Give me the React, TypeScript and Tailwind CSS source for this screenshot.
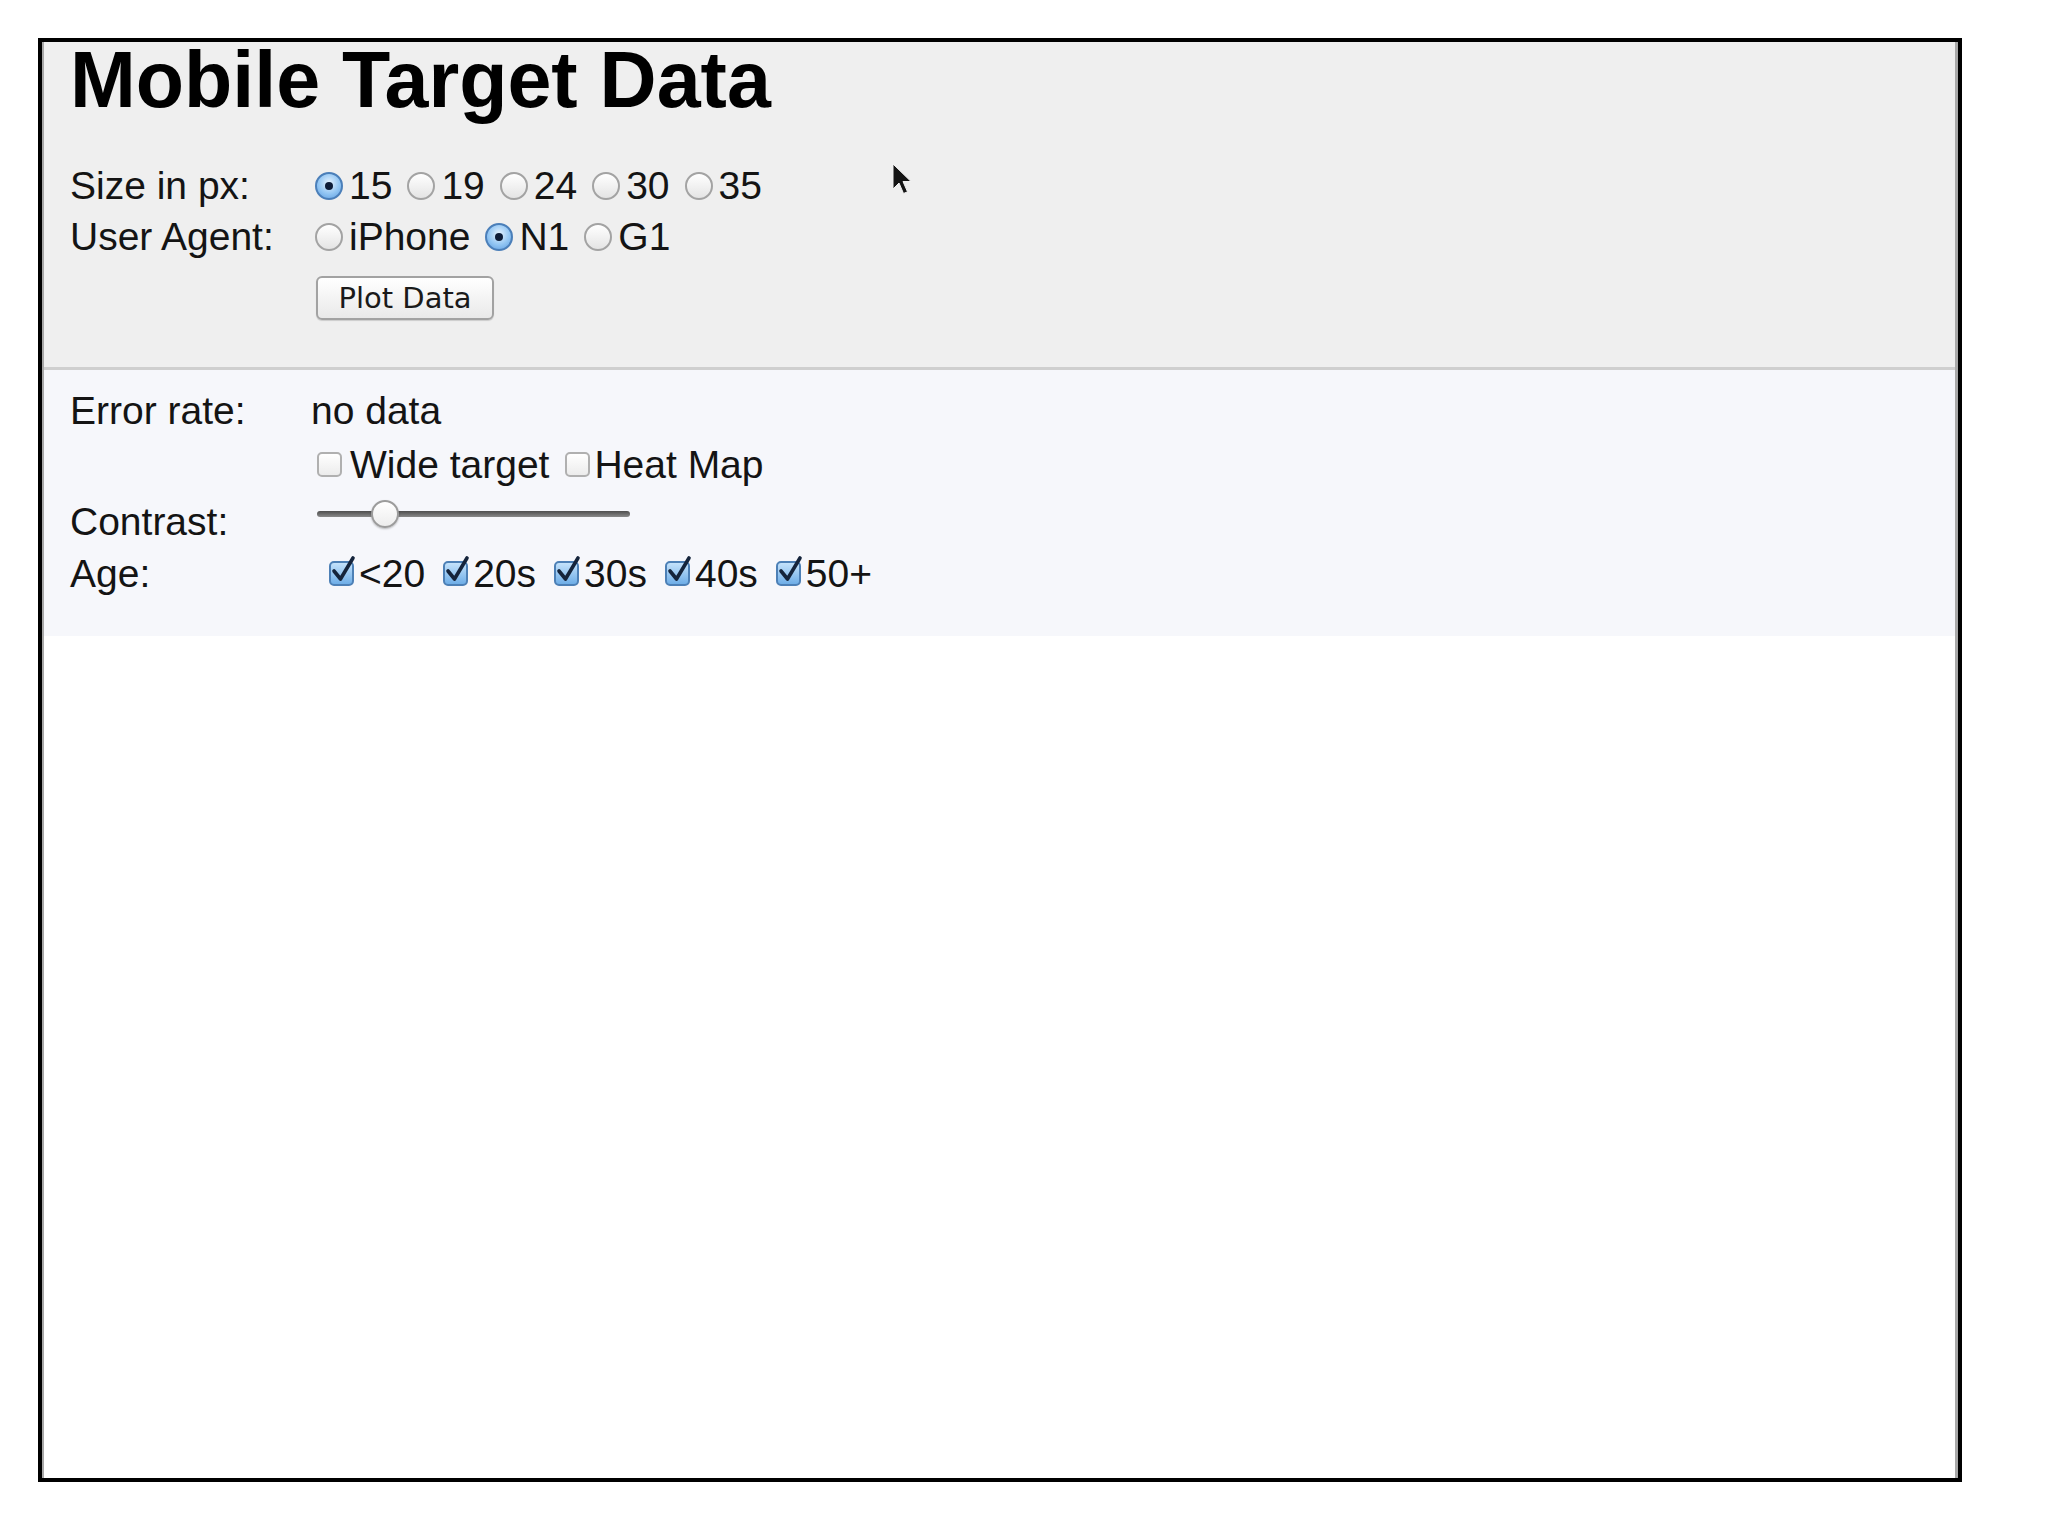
import React from 'react';

const font = { fontFamily: '"Liberation Sans", Arial, Helvetica, sans-serif' };

const Radio: React.FC<{ checked?: boolean }> = ({ checked }) => (
  <span
    className={`ml-[4px] mr-[6px] inline-flex h-[28px] w-[28px] shrink-0 items-center justify-center rounded-full border-2 ${
      checked
        ? 'border-[#4b7fb9] bg-[radial-gradient(circle_at_50%_38%,#e6f3ff_0%,#93c6f3_55%,#5d9de0_100%)]'
        : 'border-[#a3a3a3] bg-linear-to-b from-white to-[#e4e4e4]'
    }`}
  >
    {checked && <span className="h-[8px] w-[8px] rounded-full bg-[#0e1d38]" />}
  </span>
);

const Checkbox: React.FC<{ checked?: boolean; className?: string }> = ({ checked, className = '' }) => (
  <span
    className={`relative inline-block h-[25px] w-[25px] shrink-0 rounded-[5px] border-2 ${className} ${
      checked
        ? 'border-[#4d80b6] bg-linear-to-b from-[#c4e2fb] to-[#6eaee7]'
        : 'border-[#b0b0b0] bg-linear-to-b from-white to-[#ececec]'
    }`}
  >
    {checked && (
      <svg className="absolute left-[1px] top-[-7px] overflow-visible" width="24" height="28" viewBox="0 0 24 28">
        <path d="M2 15 L8.5 23 L21 2" fill="none" stroke="#15243b" strokeWidth="3.6" strokeLinecap="round" strokeLinejoin="round" />
      </svg>
    )}
  </span>
);

const RadioGroup: React.FC<{ options: string[]; selected: string }> = ({ options, selected }) => (
  <div className="flex h-[51px] items-center gap-[11px]">
    {options.map((o) => (
      <span key={o} className="inline-flex items-center">
        <Radio checked={o === selected} />
        <span>{o}</span>
      </span>
    ))}
  </div>
);

export default function App() {
  const ages = ['<20', '20s', '30s', '40s', '50+'];
  return (
    <div className="relative h-[1536px] w-[2048px] bg-white pl-[38px] pt-[38px] text-[#141414]" style={font}>
      <div className="flex h-[1444px] w-[1924px] flex-col border-4 border-black">
        <div className="flex flex-1 flex-col border-l-2 border-r-[3px] border-[#a8a8a8]">
          {/* header */}
          <div className="border-b-[3px] border-[#cfcfcf] bg-[#efefef] pb-[47px] pl-[26px] pt-[3px]">
            <h1 className="text-[79px] font-bold leading-[70px] text-black">Mobile Target Data</h1>
            <div className="mt-[45px] grid grid-cols-[241px_1fr] text-[39px] leading-[51px]">
              <div>Size in px:</div>
              <RadioGroup options={['15', '19', '24', '30', '35']} selected="15" />
              <div>User Agent:</div>
              <RadioGroup options={['iPhone', 'N1', 'G1']} selected="N1" />
              <div />
              <div className="pt-[14px]">
                <button
                  className="ml-[5px] flex h-[44px] w-[178px] items-center justify-center rounded-[6px] border-2 border-[#a2a2a2] bg-linear-to-b from-white to-[#e9e9e9] text-[29px] leading-none text-[#1a1a1a] shadow-[0_1px_1px_rgba(0,0,0,0.15)]"
                  style={{ fontFamily: '"DejaVu Sans", Verdana, sans-serif' }}
                >
                  Plot Data
                </button>
              </div>
            </div>
          </div>

          {/* controls */}
          <div className="grid grid-cols-[241px_1fr] bg-[#f6f7fb] pb-[37px] pl-[26px] pt-[15px] text-[39px] leading-[51px]">
            <div>Error rate:</div>
            <div>no data</div>

            <div className="mt-[3px]" />
            <div className="mt-[3px] flex h-[51px] items-center">
              <Checkbox className="ml-[6px] mr-[8px]" />
              <span>Wide target</span>
              <Checkbox className="ml-[16px] mr-[4px]" />
              <span>Heat Map</span>
            </div>

            <div className="pt-[6px]">Contrast:</div>
            <div className="h-[58px] pt-[21px]">
              <div className="relative ml-[6px] h-[6px] w-[313px] rounded-full bg-linear-to-b from-[#4e4e4e] to-[#8a8a8a]">
                <span className="absolute left-[54px] top-[-11px] h-[28px] w-[28px] rounded-full border-2 border-[#9c9c9c] bg-linear-to-b from-white to-[#ededed] shadow-[0_1px_2px_rgba(0,0,0,0.25)]" />
              </div>
            </div>

            <div>Age:</div>
            <div className="flex h-[51px] items-center gap-[14px] pl-[14px]">
              {ages.map((a) => (
                <span key={a} className="inline-flex items-center">
                  <Checkbox checked className="ml-[4px] mr-[5px]" />
                  <span>{a}</span>
                </span>
              ))}
            </div>
          </div>

          <div className="flex-1 bg-white" />
        </div>
      </div>

      {/* mouse pointer */}
      <svg className="absolute left-[891px] top-[163px]" width="24" height="34" viewBox="0 0 24 34">
        <path d="M2 1 L2 26 L8 20 L12.5 30.5 L16.5 28.8 L12 18.5 L20 18.5 Z" fill="#151515" stroke="#f2f2f2" strokeWidth="1" />
      </svg>
    </div>
  );
}
